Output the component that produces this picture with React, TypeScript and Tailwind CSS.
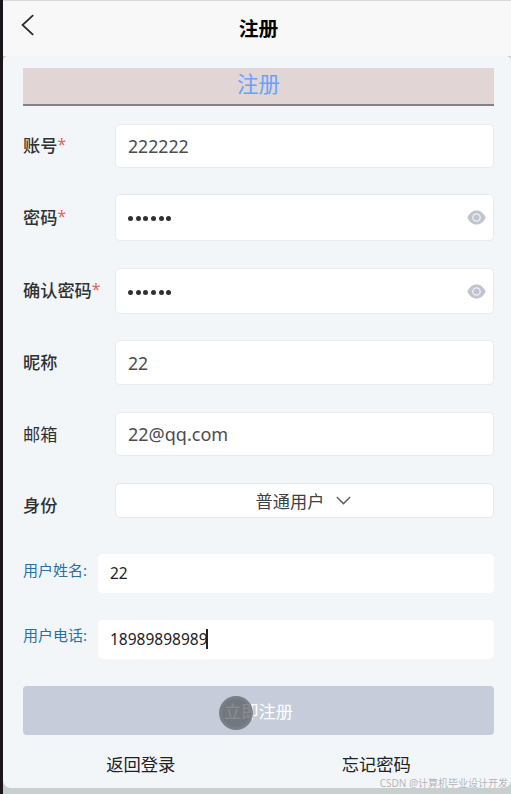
import React from 'react';

function EyeIcon() {
  return (
    <svg className="block h-[15px] w-[19px] shrink-0" viewBox="0 0 19 15">
      <path d="M0.300 7.500C2.400 3 5.600.400 9.500.400s7.100 2.600 9.200 7.100c-2.100 4.500-5.300 7.100-9.200 7.100S2.400 12 .300 7.500Z" fill="#c0c4cf" />
      <circle cx="9.500" cy="7.500" r="3.700" fill="#c0c4cf" stroke="#f1f2f5" strokeWidth="1.300" />
    </svg>
  );
}

type FieldProps = {
  label: string;
  value: string;
  required?: boolean;
  secret?: boolean;
  light?: boolean;
  row: string;
};

function Field({ label, value, required, secret, light, row }: FieldProps) {
  return (
    <div className={`flex items-center ${row}`}>
      <div className={`flex w-[92px] shrink-0 whitespace-nowrap text-[17.200px] leading-6 text-[#303133] ${light ? 'pt-px font-normal' : 'font-medium'}`}>
        {label}
        {required && <span className="text-[15.500px] leading-[21px] font-normal text-[#e56459]">*</span>}
      </div>
      <div className="flex h-full grow items-center justify-between rounded-[5px] border border-[#ebebed] bg-white pr-[7px] pl-3">
        {secret ? (
          <div className="flex gap-[2.700px] pt-0.5" aria-label={value}>
            {value.split('').map((_, i) => (
              <span key={i} className="h-[5px] w-[5px] rounded-full bg-[#303133]" />
            ))}
          </div>
        ) : (
          <span className={`leading-6 text-[#4b4c50] ${light ? 'text-[18px]' : 'text-[17.700px]'}`}>{value}</span>
        )}
        {secret && <EyeIcon />}
      </div>
    </div>
  );
}

function UserField({ label, value, row, caret }: { label: string; value: string; row: string; caret?: boolean }) {
  return (
    <div className={`flex h-[39px] ${row}`}>
      <div className={`w-[75px] shrink-0 text-[15px] leading-6 whitespace-nowrap text-[#2b70a2] ${caret ? 'pt-[3px]' : 'pt-1'}`}>{label}</div>
      <div className={`flex grow items-center rounded-[5px] bg-white pl-3 text-[15.500px] leading-6 text-[#202124] ${caret ? 'pb-0.5' : 'pb-px'}`}>
        {value}
        {caret && <span className="-ml-0.5 h-5 w-0.5 bg-[#222]" />}
      </div>
    </div>
  );
}

export default function App() {
  return (
    <div className="flex h-[794px] w-[511px] overflow-hidden bg-[#c8cfd1] font-['Noto_Sans','Noto_Sans_CJK_SC',sans-serif]">
      <div className="w-[3px] shrink-0 bg-[#19171c]" />
      <main className="relative flex h-[794px] w-[508px] flex-col">
        <header className="grid h-[56px] shrink-0 grid-cols-[1fr_auto_1fr] border-t border-[#d8d8de] bg-[#f8f8f8]">
          <svg className="mt-[13px] ml-[18px] h-[22px] w-[14px]" viewBox="0 0 14 22" fill="none" stroke="#292929" strokeWidth="1.700">
            <path d="M12.200 1.200 1.500 11l10.700 9.800" />
          </svg>
          <h1 className="pt-[14px] pl-[3px] text-[19.800px] leading-7 font-bold text-black">注册</h1>
          <span />
        </header>
        <section className="flex h-[732px] shrink-0 flex-col rounded-t-[5px] rounded-b-[8px] bg-[#f2f6f9] pt-3 pr-[17px] pl-5">
          <div className="h-[38px] shrink-0 border-b-2 border-[#858283] bg-[#e1d6d5] text-center text-[21.500px] leading-[31px] text-[#68a3f4]">注册</div>
          <Field label="账号" value="222222" required row="mt-[18px] h-[44px]" />
          <Field label="密码" value="222222" required secret row="mt-[26px] h-[47px]" />
          <Field label="确认密码" value="222222" required secret row="mt-[27px] h-[46px]" />
          <Field label="昵称" value="22" row="mt-[26px] h-[45px]" />
          <Field label="邮箱" value="22@qq.com" light row="mt-[27px] h-[44px]" />
          <div className="mt-[27px] flex h-[35px] shrink-0">
            <div className="w-[92px] shrink-0 pt-[11px] text-[17.200px] leading-6 font-medium text-[#303133]">身份</div>
            <div className="flex grow items-center justify-center gap-3 rounded-[5px] border border-[#e7e8ea] bg-white pr-0.5 text-[17.200px] leading-6 text-[#404145]">
              <span className="pt-0.5">普通用户</span>
              <svg className="h-[9px] w-[15px]" viewBox="0 0 15 9" fill="none" stroke="#606266" strokeWidth="1.500">
                <path d="m.8 1 6.700 6.600L14.200 1" />
              </svg>
            </div>
          </div>
          <UserField label="用户姓名:" value="22" row="mt-[36px]" />
          <UserField label="用户电话:" value="18989898989" row="mt-[27px]" caret />
          <div className="relative mt-[27px] h-[49px] shrink-0 rounded-[4px] bg-[#c6ccda] text-center text-[17.300px] leading-[51px] text-white">
            立即注册
            <span className="absolute top-[10px] left-[196px] h-[34px] w-[34px] rounded-full border-[3px] border-[#7f858e]/50 bg-[#3c4044]/60" />
          </div>
          <nav className="mt-[18px] grid grid-cols-2 text-center text-[17.300px] leading-6 text-[#222]">
            <span>返回登录</span>
            <span>忘记密码</span>
          </nav>
        </section>
        <div className="absolute right-[3px] bottom-[3px] text-[10px] leading-4 whitespace-nowrap text-[#b1b4b7] [text-shadow:0_0_1px_#fff]">CSDN @计算机毕业设计开发</div>
      </main>
    </div>
  );
}
